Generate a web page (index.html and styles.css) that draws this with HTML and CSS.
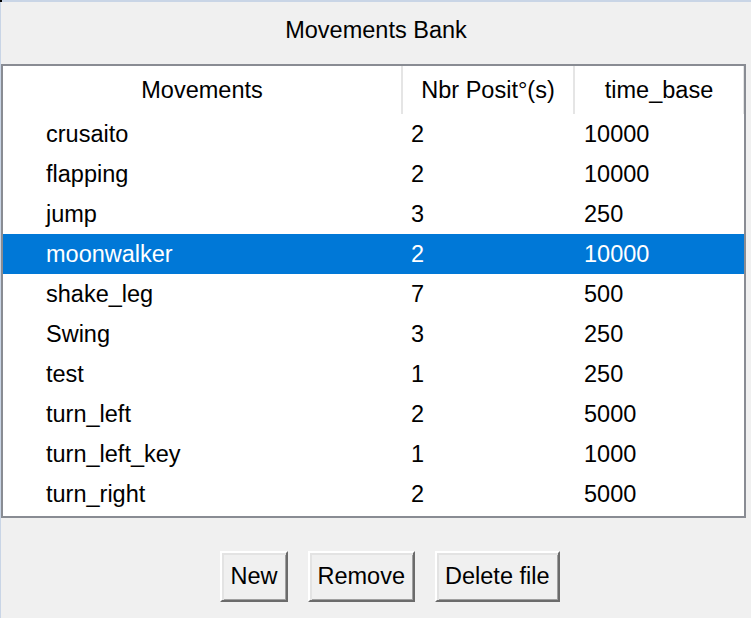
FILE: index.html
```html
<!DOCTYPE html>
<html>
<head>
<meta charset="utf-8">
<link rel="stylesheet" href="styles.css">
</head>
<body>
<div class="window">
  <span class="corner"></span>
  <div class="title">Movements Bank</div>
  <div class="frame">
    <div class="list">
      <div class="row head">
        <div class="c1">Movements</div>
        <div class="c2">Nbr Posit°(s)</div>
        <div class="c3">time_base</div>
      </div>
      <div class="row"><div class="c1">crusaito</div><div class="c2">2</div><div class="c3">10000</div></div>
      <div class="row"><div class="c1">flapping</div><div class="c2">2</div><div class="c3">10000</div></div>
      <div class="row"><div class="c1">jump</div><div class="c2">3</div><div class="c3">250</div></div>
      <div class="row sel"><div class="c1">moonwalker</div><div class="c2">2</div><div class="c3">10000</div></div>
      <div class="row"><div class="c1">shake_leg</div><div class="c2">7</div><div class="c3">500</div></div>
      <div class="row"><div class="c1">Swing</div><div class="c2">3</div><div class="c3">250</div></div>
      <div class="row"><div class="c1">test</div><div class="c2">1</div><div class="c3">250</div></div>
      <div class="row"><div class="c1">turn_left</div><div class="c2">2</div><div class="c3">5000</div></div>
      <div class="row"><div class="c1">turn_left_key</div><div class="c2">1</div><div class="c3">1000</div></div>
      <div class="row"><div class="c1">turn_right</div><div class="c2">2</div><div class="c3">5000</div></div>
    </div>
  </div>
  <div class="buttons">
    <button class="btn">New</button>
    <button class="btn">Remove</button>
    <button class="btn">Delete file</button>
  </div>
</div>
</body>
</html>
```

FILE: styles.css
```css
html, body {
  margin: 0;
  padding: 0;
  background: #f0f0f0;
}
body {
  font-family: "Liberation Sans", Arial, sans-serif;
  font-size: 23.5px;
  color: #000;
}
.window {
  position: relative;
  width: 750px;
  height: 616px;
  border-top: 2px solid #c9d5e6;
  border-left: 1px solid #c9d5e6;
  display: flex;
  flex-direction: column;
}
.corner {
  position: absolute;
  left: -1px;
  top: -2px;
  width: 2px;
  height: 2px;
  background: #000;
}
.title {
  height: 62px;
  display: flex;
  align-items: center;
  justify-content: center;
  padding-bottom: 6px;
  box-sizing: border-box;
}
.frame {
  width: 745px;
  height: 454px;
  box-sizing: border-box;
  border: 2px solid #898c93;
  background: #fff;
}
.list {
  display: flex;
  flex-direction: column;
}
.row {
  display: grid;
  grid-template-columns: 400px 172px 169px;
  height: 40px;
  align-items: center;
  line-height: 40px;
}
.row.head {
  height: 48px;
  line-height: 48px;
}
.row.head > div {
  text-align: center;
  padding: 0;
  height: 48px;
  border-right: 2px solid #e5e5e5;
  box-sizing: border-box;
}
.row.head > .c3 {
  border-right: 1px solid #e5e5e5;
}
.row .c1 { padding-left: 43px; }
.row .c2 { padding-left: 8px; }
.row .c3 { padding-left: 9px; }
.row.sel {
  background: #0078d7;
  color: #fff;
}
.buttons {
  display: flex;
  justify-content: center;
  gap: 20px;
  padding-top: 33px;
  padding-left: 28px;
}
.btn {
  font-family: inherit;
  font-size: 23.5px;
  color: #000;
  height: 51px;
  padding: 0 8px;
  background: #f0f0f0;
  border: 2px solid;
  border-color: #ffffff #6b6b6b #6b6b6b #ffffff;
  box-shadow: inset 2px 2px 0 #e3e3e3, inset -1px -1px 0 #a0a0a0;
  border-radius: 0;
}
```
